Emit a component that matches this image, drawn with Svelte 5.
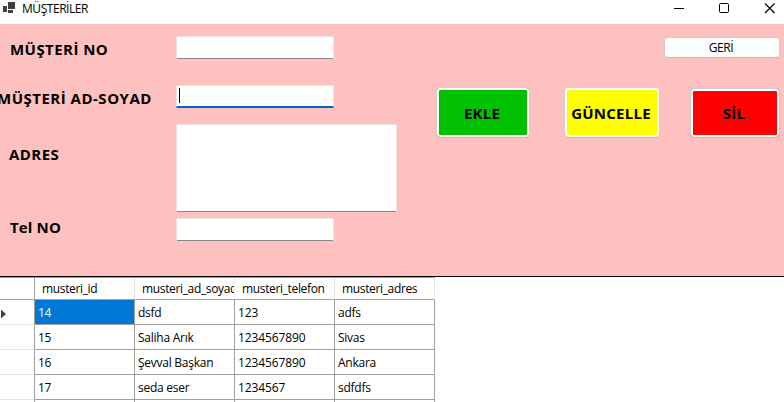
<script>
  const columns = ['musteri_id', 'musteri_ad_soyad', 'musteri_telefon', 'musteri_adres'];
  const rows = [
    ['14', 'dsfd', '123', 'adfs'],
    ['15', 'Saliha Arık', '1234567890', 'Sivas'],
    ['16', 'Şevval Başkan', '1234567890', 'Ankara'],
    ['17', 'seda eser', '1234567', 'sdfdfs'],
    ['', '', '', '']
  ];
</script>

<div class="window">
  <header>
    <svg class="logo" width="14" height="14" viewBox="0 0 14 14" fill="#3f3f3f" shape-rendering="crispEdges">
      <rect x="5" y="0" width="7" height="7" /><rect x="0" y="4" width="4" height="6" /><rect x="5" y="8" width="5" height="3" />
    </svg>
    <h1>MÜŞTERİLER</h1>
    <svg class="controls" width="106" height="16" viewBox="0 0 106 16" fill="none" stroke="#000">
      <path d="M0 8.5h10" />
      <rect x="45.5" y="3.5" width="9" height="9" rx="1" />
      <path d="M91 3.5l9.5 9.5M100.5 3.5L91 13" stroke-width="1.2" />
    </svg>
  </header>

  <main>
    <section class="fields">
      <div class="field no"><span class="label">MÜŞTERİ NO</span><div class="box"></div></div>
      <div class="field name"><span class="label">MÜŞTERİ AD-SOYAD</span><div class="box active"><i></i></div></div>
      <div class="field address"><span class="label">ADRES</span><div class="box"></div></div>
      <div class="field tel"><span class="label">Tel NO</span><div class="box"></div></div>
    </section>
    <section class="actions">
      <button class="back">GERİ</button>
      <div class="commands">
        <button class="add">EKLE</button>
        <button class="update">GÜNCELLE</button>
        <button class="delete">SİL</button>
      </div>
    </section>
  </main>

  <div class="grid">
    <div class="row head">
      <div class="mark"></div>
      {#each columns as name}<div class="cell">{name}</div>{/each}
    </div>
    {#each rows as row, r}
      <div class="row">
        <div class="mark">
          {#if r === 0}<svg width="6" height="10" viewBox="0 0 6 10"><path d="M1 0.5L6 5L1 9.5z" fill="#404040" /></svg>{/if}
        </div>
        {#each row as value, i}<div class="cell" class:number={i === 2} class:selected={r === 0 && i === 0}>{value}</div>{/each}
      </div>
    {/each}
  </div>
</div>

<style>
  :global(body) { margin: 0; overflow: hidden; }
  .window { width: 784px; height: 402px; overflow: hidden; background: #fff; color: #000; font: 12px/16px "Open Sans", "Noto Sans", sans-serif; display: flex; flex-direction: column; }
  .window :global(*) { box-sizing: border-box; }
  header { height: 24px; flex: none; display: flex; align-items: flex-start; }
  .logo { margin: 2px 0 0 3px; }
  h1 { font-size: 12px; line-height: 16px; font-weight: 400; margin: 1px 0 0 5px; letter-spacing: -0.45px; }
  .controls { margin: 0 4px 0 auto; }
  main { height: 253px; flex: none; background: #ffc0c0; border-bottom: 1px solid #000; display: flex; }
  .fields { width: 400px; padding-top: 12px; }
  .field { display: flex; }
  .label { width: 176px; flex: none; padding-left: 10px; font-weight: 700; font-size: 15px; line-height: 20px; letter-spacing: 0.45px; white-space: nowrap; }
  .box { width: 158px; height: 23px; background: #fff; border: 1px solid #e8e5e5; border-bottom-color: #868686; border-radius: 2px; }
  .no .label { padding-top: 3px; }
  .name { margin-top: 26px; }
  .name .label { padding: 3px 0 0; text-indent: -3px; letter-spacing: 0.5px; }
  .box.active { border-bottom: 2px solid #0067c0; border-radius: 2px 2px 0 0; padding: 2px 0 0 2px; }
  .active i { display: block; width: 1px; height: 15px; background: #000; }
  .address { margin-top: 16px; }
  .address .label { padding: 20px 0 0 9px; }
  .address .box { width: 221px; height: 88px; }
  .tel { margin-top: 6px; }
  .tel .label { letter-spacing: 0.15px; margin-top: -1px; }
  button { padding: 0; margin: 0; color: #000; font: inherit; white-space: nowrap; border: 1px solid #d4cccc; border-bottom-color: #c4bcbc; border-radius: 4px; }
  .actions { flex: 1; display: flex; flex-direction: column; padding: 13px 4px 0 36px; }
  .back { align-self: flex-end; width: 116px; height: 21px; background: #fdfdfd; line-height: 18px; letter-spacing: -0.4px; padding-right: 2px; }
  .commands { display: flex; margin-top: 29px; align-items: flex-end; }
  .commands button { height: 51px; font-weight: 700; font-size: 15px; letter-spacing: 0.25px; box-shadow: inset 0 0 0 2px #fff; border-radius: 4px; padding-right: 2px; }
  .commands .add { width: 94px; background: #00c000; }
  .commands .update { width: 96px; margin-left: 34px; background: #ff0; }
  .commands .delete { width: 90px; height: 50px; margin-left: 30px; background: #f00; padding-bottom: 1px; }
  .grid { width: 435px; border-top: 1px solid #a0a0a0; flex: none; }
  .row { display: grid; grid-template-columns: 35px repeat(4, 100px); height: 25px; }
  .cell { border-right: 1px solid #a0a0a0; border-bottom: 1px solid #a0a0a0; padding: 5px 0 0 3px; overflow: hidden; white-space: nowrap; letter-spacing: -0.25px; }
  .number { letter-spacing: -0.1px; }
  .mark { border-right: 1px solid #a0a0a0; border-bottom: 1px solid #e5e5e5; padding-top: 9px; line-height: 0; }
  .head { height: 22px; }
  .head .mark { border-bottom-color: #a0a0a0; }
  .head .cell { border-right-color: #e5e5e5; padding: 3px 0 0 7px; letter-spacing: -0.35px; }
  .selected { background: #0078d7; color: #fff; }
</style>
